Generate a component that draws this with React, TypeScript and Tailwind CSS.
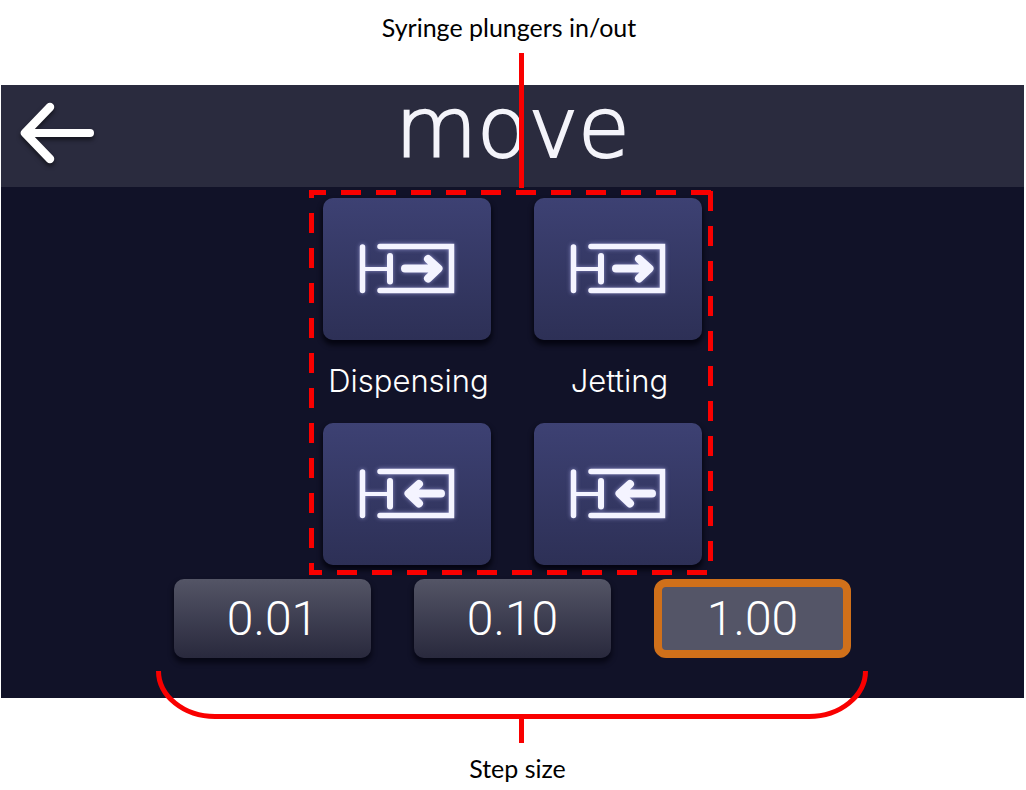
import { useState } from "react";

type Direction = "in" | "out";

function BackArrow() {
  return (
    <svg width="80" height="66" viewBox="18 100 80 66" fill="none" stroke="#fff" strokeWidth="8" strokeLinecap="round" strokeLinejoin="round" className="drop-shadow-[0_3px_2px_rgba(0,0,0,0.5)]" aria-hidden="true">
      <path d="M51 107 L26 133 L51 159" strokeWidth="8.500" />
      <path d="M28 133 H91" />
    </svg>
  );
}

function SyringeIcon({ direction }: { direction: Direction }) {
  return (
    <svg width="96" height="52" viewBox="36 45 96 52" fill="none" stroke="#f4f4ff" strokeLinecap="round" className="overflow-visible drop-shadow-[0_0_2px_rgba(190,190,255,0.6)]" aria-hidden="true">
      <path d="M39.500 49 V92.500" strokeWidth="5.500" />
      <path d="M40 71 H67" strokeWidth="4" />
      <path d="M67 58 V83.500" strokeWidth="6" />
      <path d="M57 48.500 H128.500 V92.500 H57" strokeWidth="5.500" />
      {direction === "in" ? (
        <path d="M82 70.500 H115 M105 61 L115.500 70.500 L105 80.500" strokeWidth="8" strokeLinejoin="round" />
      ) : (
        <path d="M118 70.500 H86 M96 61 L85.500 70.500 L96 80.500" strokeWidth="8" strokeLinejoin="round" />
      )}
    </svg>
  );
}

function PlungerButton({ label, direction }: { label: string; direction: Direction }) {
  return (
    <button
      type="button"
      aria-label={`${label} ${direction}`}
      className="flex h-[142px] items-center justify-center rounded-[10px] bg-linear-to-b from-[#3d4173] to-[#2d3056] shadow-[0_4px_5px_1px_rgba(0,0,10,0.75)]"
    >
      <SyringeIcon direction={direction} />
    </button>
  );
}

function PlungerCallout() {
  return (
    <svg width="404" height="522" viewBox="309 53 404 522" fill="none" stroke="#f90000" strokeWidth="5" className="pointer-events-none absolute -top-[145px] -left-[14px]" aria-hidden="true">
      <path d="M521.5 53 V188" />
      <path d="M710.5 191 V572.5 H311.5 V192.5 H713" strokeDasharray="20 15" />
    </svg>
  );
}

const steps = ["0.01", "0.10", "1.00"];
const heads = ["Dispensing", "Jetting"];

export default function App() {
  const [step, setStep] = useState("1.00");

  return (
    <div className="bg-white pb-1 font-['Lato',sans-serif] text-black">
      <p className="flex h-[85px] justify-center pt-[11px] pr-2 text-[25px] leading-8">Syringe plungers in/out</p>

      <main className="mr-[2px] ml-px bg-[#111228] pb-10 font-['Inter',sans-serif] text-white">
        <header className="grid h-[102px] grid-cols-[1fr_auto_1fr] items-center bg-[#2a2b3e]">
          <button type="button" aria-label="Back" className="w-fit pt-1 pb-[10px] pl-4">
            <BackArrow />
          </button>
          <h1 className="pb-4 font-['DejaVu_Sans',sans-serif] text-[84px] leading-[84px] font-extralight text-[#f4f4fa] [-webkit-text-stroke:2px_#f4f4fa]">move</h1>
        </header>

        <div className="flex flex-col items-center gap-[14px] pt-[11px]">
          <section className="relative grid grid-cols-[168px_168px] gap-x-[43px]">
            {heads.map((head) => (
              <PlungerButton key={head} label={head} direction="in" />
            ))}
            {heads.map((head) => (
              <h2 key={head} className="flex h-[83px] items-center justify-center pl-[3px] text-[31px] font-light">
                {head}
              </h2>
            ))}
            {heads.map((head) => (
              <PlungerButton key={head} label={head} direction="out" />
            ))}
            <PlungerCallout />
          </section>

          <section className="grid grid-cols-[197px_197px_197px] gap-x-[43px]">
            {steps.map((value) => (
              <button
                key={value}
                type="button"
                aria-pressed={value === step}
                onClick={() => setStep(value)}
                className={
                  "h-[79px] font-['Roboto',sans-serif] text-[48px] leading-none font-light " +
                  (value === step
                    ? "rounded-[12px] border-8 border-[#d0701a] bg-[#545567]"
                    : "rounded-[10px] bg-linear-to-b from-[#545566] to-[#29293d] shadow-[0_4px_5px_1px_rgba(0,0,10,0.6)]")
                }
              >
                {value}
              </button>
            ))}
          </section>
        </div>
      </main>

      <div className="relative -mt-7 flex flex-col items-center pr-[2px]">
        <svg width="712" height="74" viewBox="156 670 712 74" fill="none" stroke="#f90000" strokeWidth="5" aria-hidden="true">
          <path d="M158.500 671 C158.500 696 184 716.500 215 716.500 H809 C840 716.500 865.500 696 865.500 671 M521.500 716.500 V743" />
        </svg>
        <p className="pt-2 pl-[11px] text-[25px] leading-8">Step size</p>
      </div>
    </div>
  );
}
